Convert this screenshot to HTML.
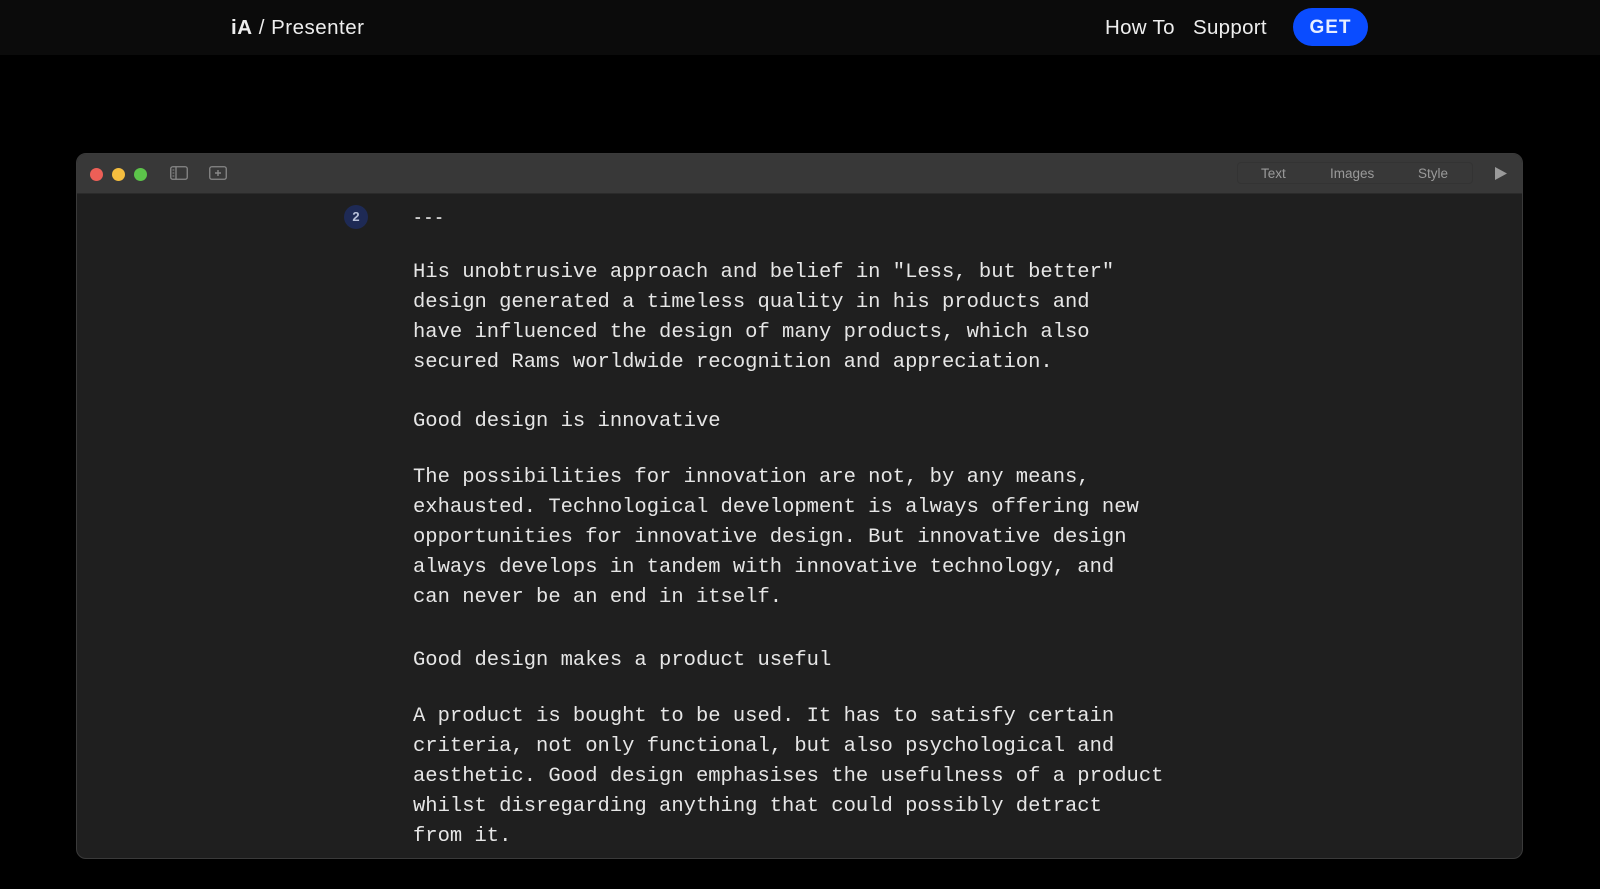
<!DOCTYPE html>
<html><head><meta charset="utf-8"><style>
html,body{margin:0;padding:0;background:#000;width:1600px;height:889px;overflow:hidden;font-family:"Liberation Sans",sans-serif}
.hdr{position:absolute;left:0;top:0;width:1600px;height:55px;background:#0b0b0b}
.logo{position:absolute;left:231px;top:16px;font-size:20.5px;color:#eee;letter-spacing:0.5px}
.logo b{font-weight:700}
.nav{position:absolute;top:16px;font-size:20.5px;color:#eee;letter-spacing:0.3px}
.get{position:absolute;left:1293px;top:8px;width:75px;height:38px;border-radius:19px;background:#0a4cff;color:#e8eeff;font-weight:700;font-size:19px;text-align:center;line-height:39px;letter-spacing:1px}
.win{position:absolute;left:76px;top:153px;width:1447px;height:706px;background:#1f1f1f;border-radius:10px;border:1px solid #3a3a3a;box-sizing:border-box;overflow:hidden}
.tb{position:absolute;left:0;top:0;right:0;height:39px;background:#383838;border-bottom:1px solid #2a2a2a}
.seg{position:absolute;left:1160px;top:8px;width:236px;height:22px;border:1px solid #333;border-radius:4px;box-sizing:border-box}
.dot{position:absolute;top:14px;width:13px;height:13px;border-radius:50%}
.tab{position:absolute;top:12px;font-size:13.5px;color:#9a9a9a}
.badge{position:absolute;left:344px;top:205px;width:24px;height:24px;border-radius:50%;background:#1e2a55;color:#b8c0d8;font:bold 13px "Liberation Sans",sans-serif;text-align:center;line-height:24px}
.t{position:absolute;left:413px;font-family:"Liberation Mono",monospace;font-size:20.5px;color:#e6e6e6;white-space:pre;line-height:30px}
</style></head><body>
<div class="hdr">
<div class="logo"><b>iA</b> / Presenter</div>
<div class="nav" style="left:1105px">How To</div>
<div class="nav" style="left:1193px">Support</div>
<div class="get">GET</div>
</div>
<div class="win">
<div class="tb">
<div class="dot" style="left:13px;background:#ec5f57"></div>
<div class="dot" style="left:35px;background:#f4bd3f"></div>
<div class="dot" style="left:57px;background:#5cc34a"></div>
<svg style="position:absolute;left:93px;top:12px" width="18" height="15"><rect x="0.75" y="0.75" width="16.5" height="12.5" rx="2" fill="none" stroke="#888" stroke-width="1.3"/><line x1="6" y1="1" x2="6" y2="13" stroke="#888" stroke-width="1.3"/><line x1="2.5" y1="4" x2="4.3" y2="4" stroke="#888"/><line x1="2.5" y1="7" x2="4.3" y2="7" stroke="#888"/><line x1="2.5" y1="10" x2="4.3" y2="10" stroke="#888"/></svg>
<svg style="position:absolute;left:132px;top:12px" width="18" height="15"><rect x="0.75" y="0.75" width="16.5" height="12.5" rx="2" fill="none" stroke="#888" stroke-width="1.3"/><line x1="9" y1="4" x2="9" y2="10" stroke="#888" stroke-width="1.4"/><line x1="6" y1="7" x2="12" y2="7" stroke="#888" stroke-width="1.4"/></svg>
<div class="seg"></div>
<div class="tab" style="left:1184px">Text</div>
<div class="tab" style="left:1253px">Images</div>
<div class="tab" style="left:1341px">Style</div>
<svg style="position:absolute;left:1417px;top:12px" width="14" height="15"><path d="M1 1 L13 7.5 L1 14 Z" fill="#9a9a9a"/></svg>
</div>
</div>
<div class="badge">2</div>
<div class="t" style="top:203px;font-weight:bold;font-size:16px;letter-spacing:1px;color:#ccc">---</div>
<div class="t" style="top:258px">His unobtrusive approach and belief in "Less, but better"
design generated a timeless quality in his products and
have influenced the design of many products, which also
secured Rams worldwide recognition and appreciation.</div>
<div class="t" style="top:407px">Good design is innovative</div>
<div class="t" style="top:463px">The possibilities for innovation are not, by any means,
exhausted. Technological development is always offering new
opportunities for innovative design. But innovative design
always develops in tandem with innovative technology, and
can never be an end in itself.</div>
<div class="t" style="top:646px">Good design makes a product useful</div>
<div class="t" style="top:702px">A product is bought to be used. It has to satisfy certain
criteria, not only functional, but also psychological and
aesthetic. Good design emphasises the usefulness of a product
whilst disregarding anything that could possibly detract
from it.</div>
</body></html>
